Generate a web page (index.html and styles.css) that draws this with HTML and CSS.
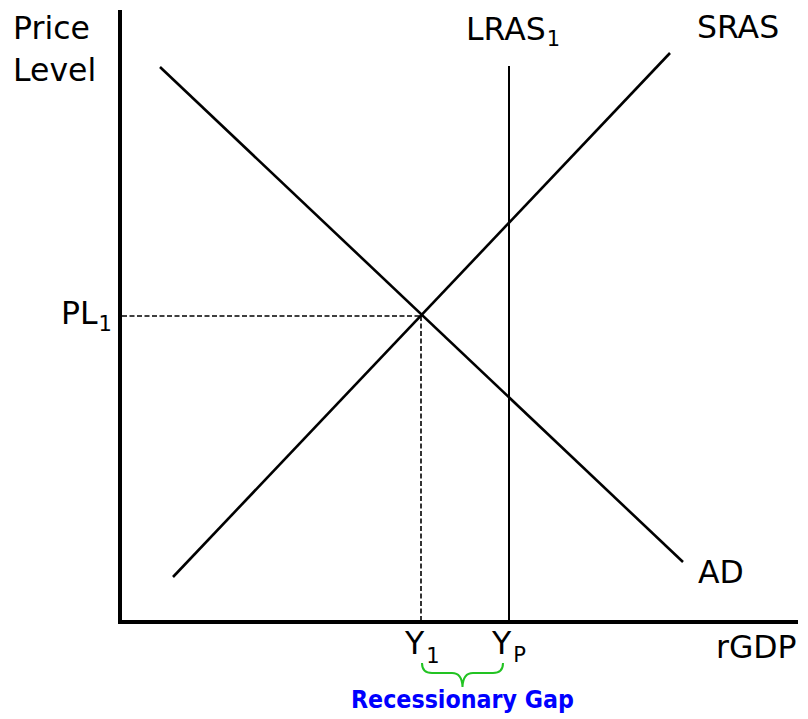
FILE: index.html
```html
<!DOCTYPE html>
<html lang="en">
<head>
<meta charset="utf-8">
<title>Recessionary Gap</title>
<link rel="stylesheet" href="styles.css">
</head>
<body>
<main class="chart">
  <svg class="graph" width="808" height="719" viewBox="0 0 808 719" xmlns="http://www.w3.org/2000/svg">
    <line class="axis" x1="120" y1="10" x2="120" y2="624"/>
    <line class="axis" x1="118" y1="622" x2="798" y2="622"/>
    <line class="dash" x1="122" y1="316" x2="421" y2="316"/>
    <line class="dash" x1="421" y1="316" x2="421" y2="620"/>
    <line class="curve" x1="160" y1="67" x2="683" y2="562"/>
    <line class="curve" x1="173" y1="577" x2="670" y2="53"/>
    <line class="lras" x1="509" y1="66" x2="509" y2="621"/>
    <path class="brace" d="M422,663 Q422,673 432,673 L452,673 Q462,673 462.5,687 Q463,673 473,673 L493,673 Q503,673 503,663"/>

    <text class="label" x="13" y="39">Price</text>
    <text class="label" x="13" y="81">Level</text>
    <text class="label" x="466" y="40">LRAS<tspan class="sub" dx="1" dy="6">1</tspan></text>
    <text class="label" x="697" y="38">SRAS</text>
    <text class="label" x="61" y="324">PL<tspan class="sub" dx="1" dy="7">1</tspan></text>
    <text class="label" x="698" y="583">AD</text>
    <text class="label" x="716" y="658">rGDP</text>
    <text class="label" x="405" y="654">Y<tspan class="sub" dx="2" dy="9">1</tspan></text>
    <text class="label" x="492" y="654">Y<tspan class="sub" dx="2" dy="8">P</tspan></text>
    <text class="gap" x="351" y="708">Recessionary Gap</text>
  </svg>
</main>
</body>
</html>
```

FILE: styles.css
```css
html, body {
  margin: 0;
  padding: 0;
  background: #ffffff;
}

.chart {
  width: 808px;
  height: 719px;
  overflow: hidden;
}

.graph {
  display: block;
}

.axis {
  stroke: #000;
  stroke-width: 4;
}

.curve {
  stroke: #000;
  stroke-width: 2.6;
}

.lras {
  stroke: #000;
  stroke-width: 2;
}

.dash {
  stroke: #000;
  stroke-width: 1.6;
  stroke-dasharray: 5 2.5;
}

.brace {
  fill: none;
  stroke: #22c322;
  stroke-width: 2;
}

.label {
  font-family: "DejaVu Sans", sans-serif;
  font-size: 31.5px;
  fill: #000;
}

.sub {
  font-size: 21px;
}

.gap {
  font-family: "DejaVu Sans Condensed", "DejaVu Sans", sans-serif;
  font-stretch: condensed;
  font-weight: bold;
  font-size: 24.7px;
  fill: #0000ff;
}
```
